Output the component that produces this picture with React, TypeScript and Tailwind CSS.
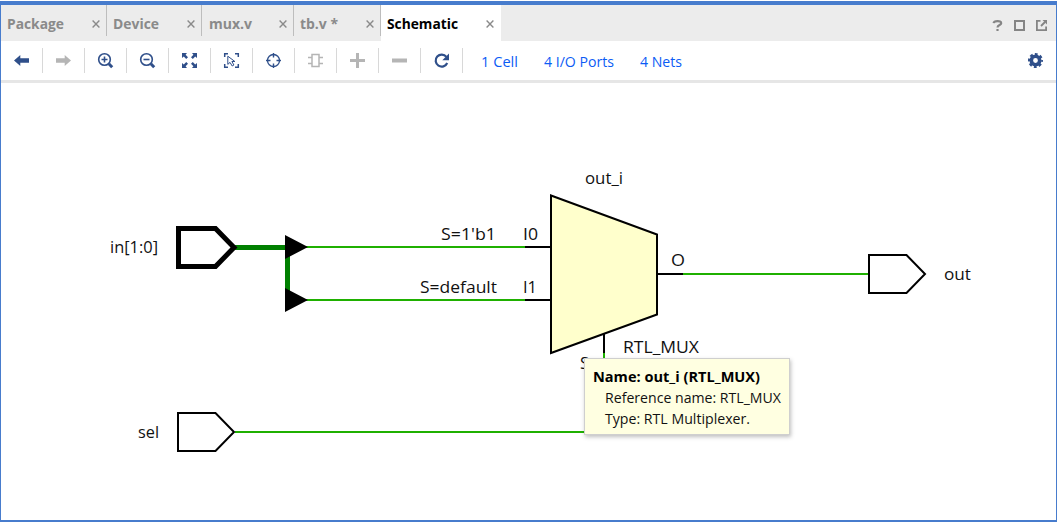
import type { ReactNode } from "react";

const NAVY = "#2f4f8a";
const GREY = "#b5b5b5";

function Icon({ children, color = NAVY }: { children: ReactNode; color?: string }) {
  return (
    <svg width="17" height="17" viewBox="0 0 17 17" fill="none" stroke={color} strokeWidth="1.6" className="block">
      {children}
    </svg>
  );
}

const tools: { name: string; icon: ReactNode }[] = [
  { name: "Back", icon: <Icon><path d="M1 8.5 7.3 3v3.3H16v4.4H7.3V14z" fill={NAVY} stroke="none" /></Icon> },
  { name: "Forward", icon: <Icon><path d="M16 8.5 9.7 3v3.3H1v4.4h8.7V14z" fill={GREY} stroke="none" /></Icon> },
  { name: "Zoom in", icon: <Icon><circle cx="7.5" cy="7.5" r="5.8" /><path d="M4.5 7.5h6M7.5 4.5v6" /><path d="m11.8 11.8 3.4 3.4" strokeWidth="3" /></Icon> },
  { name: "Zoom out", icon: <Icon><circle cx="7.5" cy="7.5" r="5.8" /><path d="M4.5 7.5h6" /><path d="m11.8 11.8 3.4 3.4" strokeWidth="3" /></Icon> },
  {
    name: "Zoom fit",
    icon: (
      <Icon>
        <path d="M1 1h5L4.6 2.8 7 5.2 5.2 7 2.8 4.6 1 6zM16 1v5l-1.8-1.4L11.8 7 10 5.2l2.4-2.4L11 1zM1 16v-5l1.8 1.4L5.2 10 7 11.8l-2.4 2.4L6 16zM16 16h-5l1.4-1.8-2.4-2.4 1.8-1.8 2.4 2.4L16 11z" fill={NAVY} stroke="none" />
      </Icon>
    ),
  },
  {
    name: "Select area",
    icon: (
      <Icon>
        <path d="M1.7 5V1.7H5M12 1.7h3.3V5M15.3 12v3.3H12M5 15.3H1.7V12" strokeWidth="1.5" />
        <path d="M4.8 4.2v8.2l2.2-2 2.2 3.6 1.7-1-2-3.5h3z" strokeWidth="1" />
      </Icon>
    ),
  },
  { name: "Target", icon: <Icon><circle cx="8.5" cy="8.5" r="6" strokeWidth="1.3" /><path d="M8.5 1v4.5M8.5 11.5V16M1 8.5h4.5M11.5 8.5H16" strokeWidth="1.4" /></Icon> },
  {
    name: "Expand cell",
    icon: <Icon color={GREY}><path d="M5 2.5h7v12H5zM1 5.5h4M1 11.5h4M12 5.5h4M12 11.5h4" strokeWidth="1.5" /></Icon>,
  },
  { name: "Add", icon: <Icon color={GREY}><path d="M1 8.5h15M8.5 1v15" strokeWidth="3" /></Icon> },
  { name: "Remove", icon: <Icon color={GREY}><path d="M1 8.5h15" strokeWidth="4" /></Icon> },
  {
    name: "Refresh",
    icon: <Icon><path d="M13.4 4.9A6 6 0 1 0 14.2 11" strokeWidth="2.2" /><path d="M16 1.5v6.7H9.3z" fill={NAVY} stroke="none" /></Icon>,
  },
];

function Close() {
  return (
    <svg width="8" height="8" viewBox="0 0 8 8" stroke="#8a8a8a" strokeWidth="1.4" className="block shrink-0">
      <path d="m.6.6 6.8 6.8M7.4.6.6 7.4" />
    </svg>
  );
}

const tabs = [
  { label: "Package", tab: "w-[106px] pl-[6px] pr-[6px]", text: 57 },
  { label: "Device", tab: "w-[95px] pl-[6px] pr-[6px]", text: 46 },
  { label: "mux.v", tab: "w-[92px] pl-[7px] pr-[6px]", text: 43 },
  { label: "tb.v *", tab: "w-[87px] pl-[6px] pr-[6px]", text: 38 },
];

function TabLabel({ text, width, fill }: { text: string; width: number; fill: string }) {
  return (
    <svg width={width} height="22" className="block overflow-visible">
      <text x="0" y="16" fill={fill} fontSize="15" fontWeight="700" textLength={width} lengthAdjust="spacingAndGlyphs">
        {text}
      </text>
    </svg>
  );
}

function Label({ x, y, w, children }: { x: number; y: number; w: number; children: string }) {
  return (
    <text x={x} y={y} textLength={w} lengthAdjust="spacingAndGlyphs" fontSize="17" fill="#111">
      {children}
    </text>
  );
}

function Link({ text, width }: { text: string; width: number }) {
  return (
    <svg width={width} height="20" className="block overflow-visible">
      <text x="0" y="16" fill="#0b5cf5" fontSize="15" textLength={width} lengthAdjust="spacingAndGlyphs">
        {text}
      </text>
    </svg>
  );
}

function Schematic() {
  return (
    <svg width="1055" height="437" viewBox="1 83 1055 437" fill="none" stroke="#000" strokeWidth="2" className="block">
      <g stroke="#1fb000" shapeRendering="crispEdges">
        <path d="M306 247H525M306 300H525M683 274H869M235 432H604V353" />
      </g>
      <path d="M233 247H288M287.5 247V300" stroke="#008000" strokeWidth="5" shapeRendering="crispEdges" />
      <path d="M178.5 228.5H215.5L234 247.5 215.5 266.5H178.5z" strokeWidth="5" />
      <path d="M285 235 308 247 285 259zM285 288 308 300 285 312z" fill="#000" stroke="none" />
      <path d="M178 413H215.5L234 432 215.5 451H178zM869 255H906.5L925 274 906.5 293H869z" />
      <path d="M525 247H551M525 300H551M657 274H683M604 333V353" shapeRendering="crispEdges" />
      <path d="M551 195.5 657 234.5V314.5L551 353z" fill="#ffffcc" />
      <g stroke="none">
        <Label x={110} y={253} w={48}>in[1:0]</Label>
        <Label x={138} y={438} w={21}>sel</Label>
        <Label x={944} y={280} w={27}>out</Label>
        <Label x={585} y={184} w={38}>out_i</Label>
        <Label x={441} y={240} w={55}>S=1'b1</Label>
        <Label x={523} y={240} w={15}>I0</Label>
        <Label x={420} y={293} w={77}>S=default</Label>
        <Label x={523} y={293} w={14}>I1</Label>
        <Label x={671} y={266} w={14}>O</Label>
        <Label x={623} y={353} w={76}>RTL_MUX</Label>
        <Label x={580} y={369} w={9}>S</Label>
      </g>
    </svg>
  );
}

export default function App() {
  return (
    <div className="flex h-[522px] w-[1057px] flex-col bg-white pt-px font-['Open_Sans','Noto_Sans',sans-serif]">
      <div className="flex flex-1 flex-col border-x border-t-4 border-b-2 border-[#477ccd]">
        <header className="flex h-9 shrink-0 bg-[#ececec]">
          {tabs.map((t) => (
            <div key={t.label} className={`flex h-[31px] shrink-0 items-center justify-between border-r border-[#bdbdbd] pt-[7px] ${t.tab}`}>
              <TabLabel text={t.label} width={t.text} fill="#8a8a8a" />
              <Close />
            </div>
          ))}
          <div className="flex h-9 w-[120px] shrink-0 items-center justify-between bg-white pt-[2px] pr-[7px] pl-[6px]">
            <TabLabel text="Schematic" width={71} fill="#000" />
            <Close />
          </div>
          <div className="ml-auto flex items-center gap-[11px] pt-[5px] pr-[9px]">
            <svg width="11" height="11" viewBox="0 0 11 11" fill="none" stroke="#858585" strokeWidth="2.2" className="block">
              <path d="M1.6 3.2C2 .5 9.2.3 9.2 3.2 9.2 5.2 5.5 4.8 5.5 7.6M5.5 9V11" />
            </svg>
            <svg width="11" height="11" viewBox="0 0 11 11" fill="none" stroke="#858585" strokeWidth="2" className="block">
              <path d="M1 1h9v9H1z" />
            </svg>
            <svg width="11" height="11" viewBox="0 0 11 11" fill="none" stroke="#858585" strokeWidth="1.8" className="block">
              <path d="M4.5.9H.9v9.2h9.2V6.5M5 6l4-4" />
              <path d="M6.5 0H11v4.5z" fill="#858585" stroke="none" />
            </svg>
          </div>
        </header>

        <nav className="flex h-[42px] shrink-0 items-center border-b-[3px] border-[#e6e6e6]">
          {tools.map((t) => (
            <button key={t.name} aria-label={t.name} className="flex h-[25px] w-[42px] shrink-0 items-center justify-center border-r border-[#d8d8d8]">
              {t.icon}
            </button>
          ))}
          <div className="ml-[18px] flex gap-[26px] pt-px">
            <Link text="1 Cell" width={37} />
            <Link text="4 I/O Ports" width={70} />
            <Link text="4 Nets" width={42} />
          </div>
          <svg width="15" height="15" viewBox="0 0 15 15" fill="none" stroke={NAVY} className="mr-[13px] ml-auto block">
            <circle cx="7.5" cy="7.5" r="4.2" strokeWidth="3.6" />
            <circle cx="7.5" cy="7.5" r="6.4" strokeWidth="2.2" strokeDasharray="2.813 2.213" strokeDashoffset="1.406" />
          </svg>
        </nav>

        <main className="relative h-[437px]">
          <Schematic />
          <div className="absolute top-[275px] left-[583px] h-[77px] w-[206px] border border-[#cfcfcf] bg-[#ffffe1] shadow-[1px_2px_4px_rgba(0,0,0,0.25)]">
            <svg width="204" height="75" viewBox="585 359 204 75" fontSize="14.5" fill="#111" className="block">
              <text x="593" y="382" fontWeight="700" fill="#000" textLength="167" lengthAdjust="spacingAndGlyphs">Name: out_i (RTL_MUX)</text>
              <text x="605" y="403" textLength="176" lengthAdjust="spacingAndGlyphs">Reference name: RTL_MUX</text>
              <text x="605" y="424" textLength="145" lengthAdjust="spacingAndGlyphs">Type: RTL Multiplexer.</text>
            </svg>
          </div>
        </main>
      </div>
    </div>
  );
}
